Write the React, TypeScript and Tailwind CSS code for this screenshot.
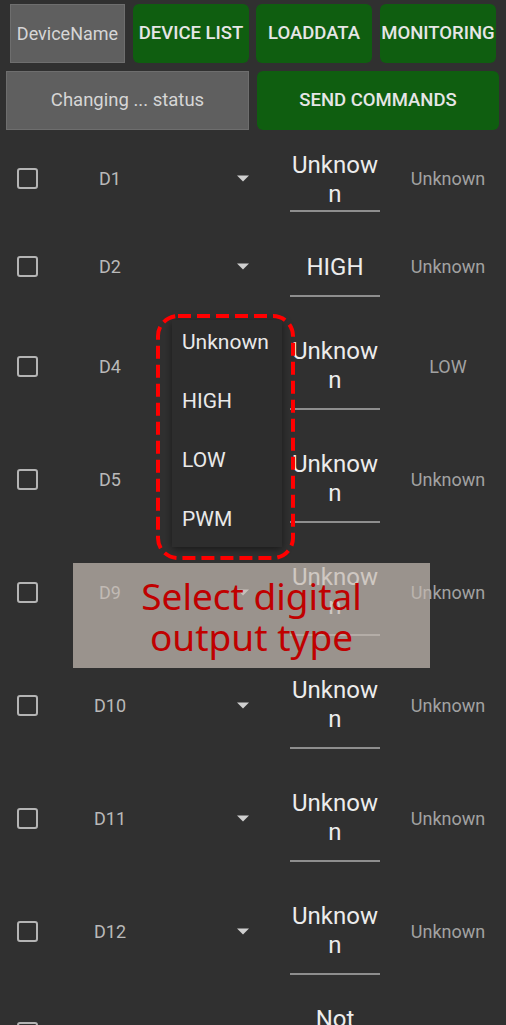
import { useState } from 'react';

interface PinRow {
  pin: string;
  value: string[];
  status: string;
  h: string;
  pt: string;
  gap: string;
}

const ROWS: PinRow[] = [
  { pin: 'D1', value: ['Unknow', 'n'], status: 'Unknown', h: 'h-[89px]', pt: 'pt-[17px]', gap: 'mt-[1px]' },
  { pin: 'D2', value: ['HIGH'], status: 'Unknown', h: 'h-[87px]', pt: 'pt-[30px]', gap: 'mt-[13px]' },
  { pin: 'D4', value: ['Unknow', 'n'], status: 'LOW', h: 'h-[113px]', pt: 'pt-[27px]', gap: 'mt-[13px]' },
  { pin: 'D5', value: ['Unknow', 'n'], status: 'Unknown', h: 'h-[113px]', pt: 'pt-[27px]', gap: 'mt-[13px]' },
  { pin: 'D9', value: ['Unknow', 'n'], status: 'Unknown', h: 'h-[113px]', pt: 'pt-[27px]', gap: 'mt-[13px]' },
  { pin: 'D10', value: ['Unknow', 'n'], status: 'Unknown', h: 'h-[113px]', pt: 'pt-[27px]', gap: 'mt-[13px]' },
  { pin: 'D11', value: ['Unknow', 'n'], status: 'Unknown', h: 'h-[113px]', pt: 'pt-[27px]', gap: 'mt-[13px]' },
  { pin: 'D12', value: ['Unknow', 'n'], status: 'Unknown', h: 'h-[113px]', pt: 'pt-[27px]', gap: 'mt-[13px]' },
  { pin: 'D13', value: ['Not', 'set'], status: 'Unknown', h: 'h-[89px]', pt: 'pt-[17px]', gap: 'mt-[13px]' },
];

const OUTPUT_TYPES = ['Unknown', 'HIGH', 'LOW', 'PWM'];

export default function App() {
  const [checked, setChecked] = useState<Record<string, boolean>>({});

  return (
    <div
      className="relative h-[1025px] w-full overflow-hidden bg-[#303030]"
      style={{ fontFamily: 'Roboto, "Liberation Sans", sans-serif' }}
    >
      {/* Toolbar */}
      <div className="flex pt-[4px] pl-[10px]">
        <div className="flex h-[59px] w-[115px] items-center justify-center border border-[#6e6e6e] bg-[#5f5f5f] text-[18px] text-[#d6d6d6]">
          DeviceName
        </div>
        <GreenButton className="ml-[8px] w-[116px]">DEVICE LIST</GreenButton>
        <GreenButton className="ml-[7px] w-[116px]">LOADDATA</GreenButton>
        <GreenButton className="ml-[8px] w-[116px]">MONITORING</GreenButton>
      </div>
      <div className="flex pt-[8px] pl-[6px]">
        <div className="flex h-[59px] w-[243px] items-center justify-center border border-[#6e6e6e] bg-[#5f5f5f] text-[18.5px] text-[#d6d6d6]">
          Changing ... status
        </div>
        <GreenButton className="ml-[8px] w-[242px]">SEND COMMANDS</GreenButton>
      </div>

      {/* Pin list */}
      <div className="mt-[4px]">
        {ROWS.map((row) => (
          <div key={row.pin} className={`flex items-start pl-[17px] ${row.h}`}>
            <div className="flex h-full items-center">
              <button
                type="button"
                onClick={() => setChecked((c) => ({ ...c, [row.pin]: !c[row.pin] }))}
                className={`h-[21px] w-[21px] rounded-[3px] border-2 border-[#b4b4b4] ${checked[row.pin] ? 'bg-[#b4b4b4]' : ''}`}
              />
            </div>
            <div className="ml-[42px] flex h-full w-[60px] items-center justify-center text-[18px] text-[#b9b9b9]">
              {row.pin}
            </div>
            <div className="ml-[97px] flex h-full w-[12px] items-center">
              <svg width="12" height="7" viewBox="0 0 12 7">
                <path d="M0 0.5h12L6 6.5z" fill="#cfcfcf" />
              </svg>
            </div>
            <div className={`ml-[41px] flex w-[90px] flex-col items-center ${row.pt}`}>
              <div className="text-center text-[24px] leading-[29px] text-[#ececec]">
                {row.value.map((line) => (
                  <div key={line}>{line}</div>
                ))}
              </div>
              <div className={`h-[2px] w-full bg-[#8e8e8e] ${row.gap}`} />
            </div>
            <div className="ml-[10px] flex h-full w-[116px] items-center justify-center text-[18px] text-[#a2a2a2]">
              {row.status}
            </div>
          </div>
        ))}
      </div>

      {/* Open dropdown menu */}
      <div className="absolute left-[172px] top-[320px] flex h-[227px] w-[110px] flex-col gap-[35px] bg-[#2d2d2d] pl-[10px] pt-[10px] text-[21px] leading-[24px] text-[#e9e9e9] shadow-[0_2px_8px_rgba(0,0,0,0.5)]">
        {OUTPUT_TYPES.map((t) => (
          <div key={t}>{t}</div>
        ))}
      </div>
      <svg className="absolute left-[156px] top-[314px]" width="139" height="246" viewBox="0 0 139 246">
        <rect
          x="2"
          y="2"
          width="135"
          height="242"
          rx="20"
          fill="none"
          stroke="#ff0000"
          strokeWidth="4"
          strokeDasharray="13 6"
        />
      </svg>

      {/* Annotation */}
      <div
        className="absolute left-[73px] top-[563px] flex h-[105px] w-[357px] flex-col items-center justify-center bg-[rgba(196,186,177,0.72)] text-center text-[37px] leading-[41px] text-[#c00000]"
        style={{ fontFamily: '"Noto Sans", "Open Sans", sans-serif' }}
      >
        <div>Select digital</div>
        <div>output type</div>
      </div>
    </div>
  );
}

function GreenButton({ children, className }: { children: React.ReactNode; className?: string }) {
  return (
    <button
      type="button"
      className={`flex h-[59px] items-center justify-center rounded-[6px] bg-[#0f5e10] text-[18.5px] font-medium text-[#e6e6e6] ${className ?? ''}`}
    >
      {children}
    </button>
  );
}
